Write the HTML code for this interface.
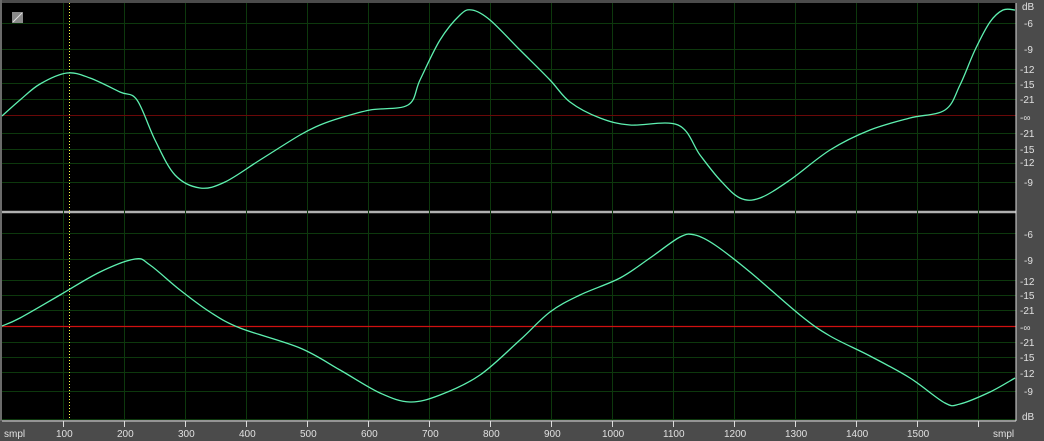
<!DOCTYPE html><html><head><style>
body{margin:0;width:1044px;height:441px;background:#4b4b4b;overflow:hidden;font-family:"Liberation Sans",sans-serif;}
svg{position:absolute;left:0;top:0}
text{font-family:"Liberation Sans",sans-serif;font-size:10px;fill:#e0e0e0}
</style></head><body>
<svg width="1044" height="441" xmlns="http://www.w3.org/2000/svg">
<rect x="0" y="0" width="1044" height="441" fill="#4b4b4b"/>
<rect x="2" y="3" width="1014" height="207" fill="#000"/>
<rect x="2" y="214" width="1014" height="206" fill="#000"/>
<rect x="0" y="0" width="2" height="421" fill="#6a6a6a"/>
<rect x="2" y="210" width="1014" height="4" fill="#2a2a2a"/>
<rect x="2" y="211" width="1014" height="2" fill="#b0b0b0"/>
<g stroke="#0d380d" stroke-width="1">
<path d="M63.5 3V420M124.5 3V420M185.5 3V420M246.5 3V420M307.5 3V420M368.5 3V420M429.5 3V420M490.5 3V420M551.5 3V420M612.5 3V420M673.5 3V420M734.5 3V420M795.5 3V420M856.5 3V420M917.5 3V420M978.5 3V420"/>
<path d="M2 23.5H1016M2 49.5H1016M2 69.5H1016M2 83.5H1016M2 99.5H1016M2 133.5H1016M2 149.5H1016M2 163.5H1016M2 182.5H1016"/>
<path d="M2 233.5H1016M2 259.5H1016M2 280.5H1016M2 295.5H1016M2 310.5H1016M2 342.5H1016M2 357.5H1016M2 372.5H1016M2 391.5H1016M2 419.5H1016"/>
</g>
<path d="M2 115.5H1016" stroke="#6a0808" stroke-width="1"/>
<path d="M2 326.5H1016" stroke="#d01010" stroke-width="1.2"/>
<path d="M69.5 3V420" stroke="#ffff40" stroke-width="1" stroke-dasharray="1,2"/>
<rect x="12" y="12" width="11" height="11" fill="#8a8a8a"/>
<path d="M13 22L22 13" stroke="#e0e0e0"/>
<g fill="none" stroke="#5ef0b0" stroke-width="1.3">
<path id="c1"/><path id="c2"/>
</g>
<g stroke="#ddd" stroke-width="1">
<path d="M1016 3V421M2 421H1016"/>
<path d="M63.5 421v6M124.5 421v6M185.5 421v6M246.5 421v6M307.5 421v6M368.5 421v6M429.5 421v6M490.5 421v6M551.5 421v6M612.5 421v6M673.5 421v6M734.5 421v6M795.5 421v6M856.5 421v6M917.5 421v6M978.5 421v6"/>
</g>
<g font-size="10">
<text x="1022" y="10">dB</text><text x="1024" y="27">-6</text><text x="1024" y="53">-9</text>
<text x="1020" y="73">-12</text><text x="1020" y="88">-15</text><text x="1020" y="103">-21</text>
<text x="1020" y="121">-∞</text><text x="1020" y="137">-21</text><text x="1020" y="153">-15</text>
<text x="1020" y="166">-12</text><text x="1024" y="186">-9</text>
<text x="1024" y="238">-6</text><text x="1024" y="264">-9</text><text x="1020" y="285">-12</text>
<text x="1020" y="299">-15</text><text x="1020" y="314">-21</text><text x="1020" y="331">-∞</text>
<text x="1020" y="346">-21</text><text x="1020" y="361">-15</text><text x="1020" y="377">-12</text>
<text x="1024" y="395">-9</text><text x="1022" y="420">dB</text>
<text x="4" y="437">smpl</text><text x="993" y="437">smpl</text>
<text x="56" y="437">100</text><text x="117" y="437">200</text><text x="178" y="437">300</text><text x="239" y="437">400</text><text x="300" y="437">500</text><text x="361" y="437">600</text><text x="422" y="437">700</text><text x="483" y="437">800</text><text x="544" y="437">900</text><text x="602" y="437">1000</text><text x="663" y="437">1100</text><text x="724" y="437">1200</text><text x="785" y="437">1300</text><text x="846" y="437">1400</text><text x="907" y="437">1500</text>
</g>
</svg>
<script>
function cr(p){var d="M"+p[0][0]+" "+p[0][1];for(var i=0;i<p.length-1;i++){var a=p[i-1]||p[i],b=p[i],c=p[i+1],e=p[i+2]||c;d+=" C"+(b[0]+(c[0]-a[0])/6).toFixed(1)+" "+(b[1]+(c[1]-a[1])/6).toFixed(1)+" "+(c[0]-(e[0]-b[0])/6).toFixed(1)+" "+(c[1]-(e[1]-b[1])/6).toFixed(1)+" "+c[0]+" "+c[1];}return d;}
var A=[[2,116],[20,100],[40,84],[67,73],[90,78],[120,92],[137,100],[155,140],[175,175],[200,188],[225,182],[260,160],[300,135],[320,125],[340,118],[370,110],[408,105],[420,80],[440,40],[460,15],[472,10],[490,20],[520,50],[550,80],[570,102],[600,118],[630,125],[678,125],[700,155],[720,180],[740,198],[760,198],[790,180],[830,150],[870,130],[910,118],[945,110],[960,85],[975,50],[990,22],[1003,10],[1015,10]];
var B=[[2,326],[20,318],[60,295],[100,272],[135,259],[150,265],[180,290],[210,312],[240,328],[300,348],[340,370],[380,393],[410,402],[440,395],[480,375],[520,340],[550,312],[580,295],[620,278],[650,258],[680,237],[695,235],[715,245],[750,272],[800,315],[830,336],[870,356],[910,378],[945,403],[960,404],[990,392],[1015,378]];
document.getElementById("c1").setAttribute("d",cr(A));
document.getElementById("c2").setAttribute("d",cr(B));
</script>
</body></html>
